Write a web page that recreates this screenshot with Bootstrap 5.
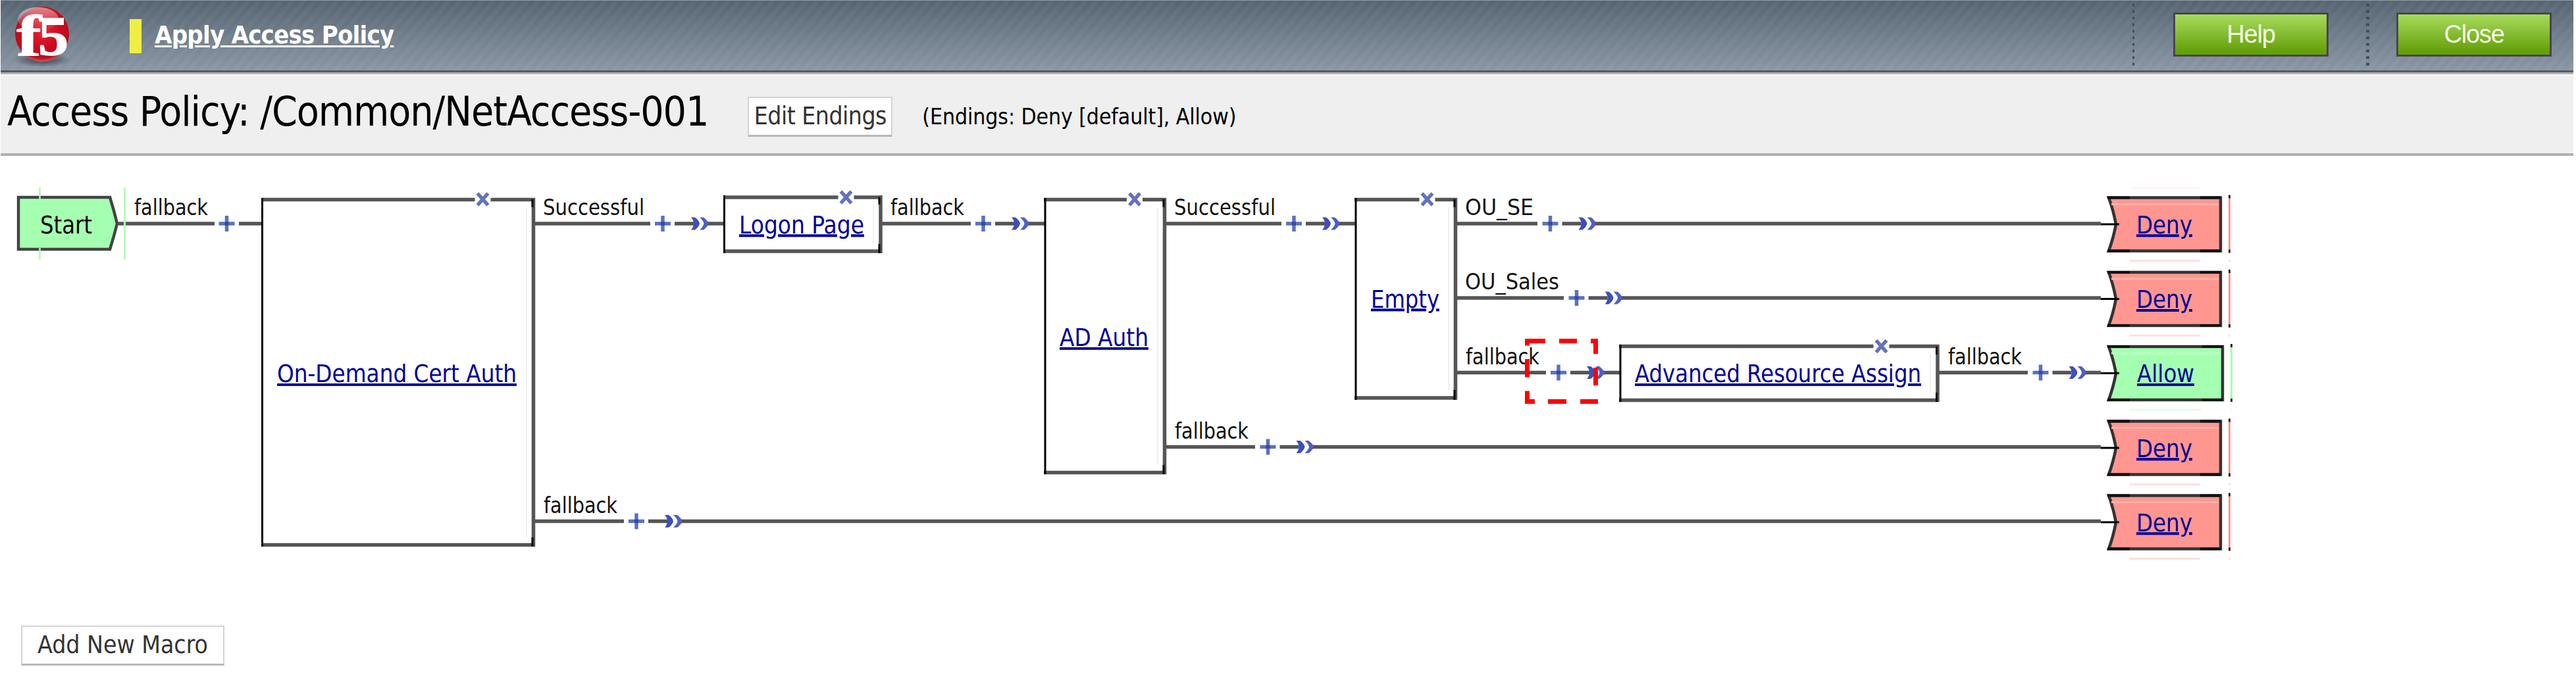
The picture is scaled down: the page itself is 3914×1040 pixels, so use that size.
<!DOCTYPE html>
<html lang="en">
<head>
<meta charset="utf-8">
<meta name="viewport" content="width=device-width, initial-scale=1">
<title>Access Policy: /Common/NetAccess-001</title>
<link href="https://cdn.jsdelivr.net/npm/bootstrap@5.3.0/dist/css/bootstrap.min.css" rel="stylesheet">
<style>
  body { font-family: "DejaVu Sans Condensed", "DejaVu Sans", sans-serif; font-stretch: condensed; background: #fff; color: #000; overflow: hidden; }
  .shell { width: 3909px; margin-left: 1px; }
  .topbar {
    height: 113px; padding: 0 33px 0 17px; border-bottom: 3px solid #b4b2b0; border-top: 1px solid #8f9aa3;
    background:
      linear-gradient(#4d5c6b, #4d5c6b) bottom / 100% 3px no-repeat,
      repeating-linear-gradient(130deg, rgba(255,255,255,.035) 0 4px, rgba(255,255,255,0) 7px 10px, rgba(255,255,255,.035) 13px),
      linear-gradient(#566471, #8c98a6);
  }
  .flag { width: 18px; height: 52px; background: #efee45; margin: 0 20px 2px 87px; }
  .apply { font-size: 38px; line-height: 46px; font-weight: 700; color: #fff; text-decoration-thickness: 3px; text-underline-offset: 3px; letter-spacing: -.8px; margin-bottom: 5px; }
  .apply:hover { color: #fff; }
  .dots { height: 98px; background: repeating-linear-gradient(rgba(0,0,0,0) 0 2px, #3f4c59 3px 6px, rgba(0,0,0,0) 7px 10px); margin-bottom: 8px; }
  .dots-a { width: 3px; margin-right: 59px; }
  .dots-b { width: 5px; margin: 0 41px 8px 57px; }
  .green-btn { width: 236px; height: 67px; padding: 0; border: 3px solid #4b4450; border-radius: 0; font: 38px/58px "Liberation Sans", sans-serif; letter-spacing: -1.2px; color: #f4ffe4; background: linear-gradient(#a5dc58, #97cb48 25%, #64a00a 92%); margin-bottom: 7px; }
  .green-btn:hover { color: #fff; }
  .titlebar { height: 124px; background: #efefef; border-bottom: 4px solid #b0b0b0; border-top: 2px solid #f8f8f8; padding-left: 10px; }
  .policy-title { font-size: 62px; line-height: 72px; font-weight: 400; letter-spacing: -1.1px; padding-bottom: 9px; }
  .plain-btn { border: 2px solid #d4d4d4; border-bottom: 3px solid #b8b8b8; border-radius: 0; background: #fff; color: #333; font-size: 37px; padding: 0; text-align: center; white-space: nowrap; }
  .edit-btn { width: 220px; height: 61px; line-height: 54px; letter-spacing: -.5px; margin: 7px 0 0 60px; }
  .macro-btn { width: 309px; height: 61px; line-height: 54px; margin-left: 31px; }
  .endings { font-size: 33.5px; line-height: 40px; margin-left: 45px; padding-top: 8px; letter-spacing: -.1px; }
  .canvas { display: block; margin-left: -1px; }
  .canvas text { font-size: 36.8px; }
  .canvas .lbl { font-size: 33.5px; fill: #111; }
  .canvas a text { fill: #000099; text-decoration: underline; text-decoration-thickness: 3px; text-underline-offset: 3px; }
  .wire { stroke: #555; stroke-width: 5.5; fill: none; }
  .edge { stroke: #000; stroke-width: 3; fill: none; }
  .faint { stroke: #efefef; stroke-width: 2; }
</style>
<script src="https://cdn.jsdelivr.net/npm/bootstrap@5.3.0/dist/js/bootstrap.bundle.min.js"></script>
</head>
<body>
<div class="shell">
  <header class="topbar d-flex align-items-center">
    <svg width="92" height="104" viewBox="18 4 92 104" role="img" aria-label="f5">
      <defs>
        <radialGradient id="ball" cx=".5" cy=".42" r=".6"><stop offset="0" stop-color="#e5252f"/><stop offset=".55" stop-color="#cf0a22"/><stop offset=".85" stop-color="#b3101f"/><stop offset="1" stop-color="#d8756f"/></radialGradient>
        <radialGradient id="shade"><stop offset="0" stop-color="#2b333b" stop-opacity=".9"/><stop offset="1" stop-color="#2b333b" stop-opacity="0"/></radialGradient>
        <linearGradient id="gloss" x2="0" y2="1"><stop offset="0" stop-color="#fff" stop-opacity=".5"/><stop offset="1" stop-color="#fff" stop-opacity="0"/></linearGradient>
      </defs>
      <ellipse cx="64" cy="91" rx="44" ry="11" fill="url(#shade)"/>
      <ellipse cx="64" cy="52" rx="41" ry="42" fill="url(#ball)"/>
      <ellipse cx="58" cy="29" rx="31" ry="18" fill="url(#gloss)"/>
      <text x="25" y="84" font-family="Liberation Serif" font-weight="700" font-size="88" fill="#fff" stroke="#fff" stroke-width="1" textLength="38" lengthAdjust="spacingAndGlyphs">f</text>
      <text x="58" y="84" font-family="Liberation Serif" font-weight="700" font-size="84" fill="#fff" stroke="#fff" stroke-width="1.500" textLength="46" lengthAdjust="spacingAndGlyphs">5</text>
    </svg>
    <div class="flag"></div>
    <a class="apply" href="#">Apply Access Policy</a>
    <div class="dots dots-a ms-auto"></div>
    <button class="btn green-btn">Help</button>
    <div class="dots dots-b"></div>
    <button class="btn green-btn">Close</button>
  </header>
  <section class="titlebar d-flex align-items-center">
    <h1 class="policy-title mb-0">Access Policy: /Common/NetAccess-001</h1>
    <button class="plain-btn edit-btn">Edit Endings</button>
    <span class="endings">(Endings: Deny [default], Allow)</span>
  </section>

  <svg class="canvas" width="3480" height="714" viewBox="0 237 3480 714">
    <defs>
      <g id="plus" stroke="#5b73bd" stroke-width="5.500"><path d="M-12 0H12M0-12V12"/><path d="M-3 0H3" stroke="#3549a5"/></g>
      <g id="joint"><use href="#plus" x="19"/><path class="wire" d="M37 0H66M84 0H89"/><path d="M62-9.500H68Q74-5 75 0Q74 5 68 9.500H62Q66 5 66 0Q66-5 62-9.500Z" fill="#3f4fb8"/><path d="M75-9.500H81Q87-5 88.500 0Q87 5 81 9.500H75Q81 4 81.500 0Q81-4 75-9.500Z" fill="#5060bd"/></g>
      <g id="del"><path d="M-12 0H12" stroke="#fff" stroke-width="9"/><path d="M-8-9L8 9M8-9L-8 9" stroke="#6472bb" stroke-width="5.500"/></g>
      <g id="deny">
        <path d="M3204 3H3374V84H3204Q3211 65 3215 43.500Q3211 22 3204 3Z" fill="#ff9790" stroke="#333" stroke-width="4.500"/>
        <path d="M3208 13H3371" stroke="#ffb0aa" stroke-width="3"/>
        <path d="M3202 3H3236M3343 3H3374M3202 84H3236M3343 84H3374" stroke="#111" stroke-width="4"/>
        <path d="M3387.500 2V84" stroke="#ff9790" stroke-width="3"/><path d="M3387.500-1V4M3387.500 82V87" stroke="#222" stroke-width="3"/>
        <path d="M3236 99H3343M3386 99H3389" stroke="#ffdfdd" stroke-width="3"/>
        <path d="M3192 43.500H3220" stroke="#000" stroke-width="3"/>
      </g>
      <g id="allow">
        <path d="M3204 3H3377V84H3204Q3211 65 3215 43.500Q3211 22 3204 3Z" fill="#a5ffb0" stroke="#333" stroke-width="4.500"/>
        <path d="M3208 13H3374" stroke="#bcffc4" stroke-width="3"/>
        <path d="M3202 3H3236M3346 3H3377M3202 84H3236M3346 84H3377" stroke="#111" stroke-width="4"/>
        <path d="M3390.500 2V84" stroke="#a5ffb0" stroke-width="3"/><path d="M3390.500-1V4M3390.500 82V87" stroke="#222" stroke-width="3"/>
        <path d="M3236 99H3346M3389 99H3392" stroke="#e2ffe5" stroke-width="3"/>
        <path d="M3192 43.500H3220" stroke="#000" stroke-width="3"/>
      </g>
    </defs>

    <!-- start terminal -->
    <path d="M28 300H167Q173 319 178 340Q173 360 167 379H28Z" fill="#a5ffb0" stroke="#444" stroke-width="4.500"/>
    <path d="M60.500 285V304M60.500 377V394.500M189.500 285V394.500" stroke="#a5ffb0" stroke-width="2.500"/>
    <text x="61" y="354.500" textLength="79" lengthAdjust="spacingAndGlyphs">Start</text>

    <!-- branches -->
    <path class="wire" d="M180 340H188M191 340H326M363 340H398M813 340H988M1075 340H1100M1340 340H1475M1562 340H1587M1772 340H1947M2034 340H2059M2214 340H2336M2423 340H3192M2214 453H2376M2463 453H3192M2214 566.500H2349M2436 566.500H2461M2946 566.500H3081M3168 566.500H3192M1772 679.500H1907M1994 679.500H3192M813 792.500H948M1035 792.500H3192"/>
    <use href="#plus" x="344.500" y="340"/>
    <use href="#joint" x="988" y="340"/><use href="#joint" x="1475" y="340"/><use href="#joint" x="1947" y="340"/>
    <use href="#joint" x="2336.500" y="340"/><use href="#joint" x="2376.500" y="453"/><use href="#joint" x="2349" y="566.500"/>
    <use href="#joint" x="3081.500" y="566.500"/><use href="#joint" x="1907.500" y="679.500"/><use href="#joint" x="948" y="792.500"/>

    <g>
      <text class="lbl" x="204" y="327" textLength="112" lengthAdjust="spacingAndGlyphs">fallback</text>
      <text class="lbl" x="825" y="327" textLength="154" lengthAdjust="spacingAndGlyphs">Successful</text>
      <text class="lbl" x="1353" y="327" textLength="112" lengthAdjust="spacingAndGlyphs">fallback</text>
      <text class="lbl" x="1784" y="327" textLength="154" lengthAdjust="spacingAndGlyphs">Successful</text>
      <text class="lbl" x="2226" y="327" textLength="104" lengthAdjust="spacingAndGlyphs">OU_SE</text>
      <text class="lbl" x="2226" y="440" textLength="143" lengthAdjust="spacingAndGlyphs">OU_Sales</text>
      <text class="lbl" x="2227" y="553.500" textLength="112" lengthAdjust="spacingAndGlyphs">fallback</text>
      <text class="lbl" x="2960" y="553.500" textLength="112" lengthAdjust="spacingAndGlyphs">fallback</text>
      <text class="lbl" x="1785" y="667" textLength="112" lengthAdjust="spacingAndGlyphs">fallback</text>
      <text class="lbl" x="826" y="780" textLength="112" lengthAdjust="spacingAndGlyphs">fallback</text>
    </g>

    <!-- action boxes -->
    <path class="wire" d="M397 303.500H813M397 828.500H813M810.500 301V831"/><path class="edge" d="M398.500 301V831M809 303V315M809 817V831"/><path class="faint" d="M800 315V817"/>
    <path class="wire" d="M1099 300H1340M1099 382H1340M1338 297V385"/><path class="edge" d="M1100.500 297V385M1336 300V311M1336 371V385"/><path class="faint" d="M1327 311V371"/>
    <path class="wire" d="M1586 303.500H1772M1586 718.500H1772M1769.500 301V721"/><path class="edge" d="M1588 301V721M1768 303V315M1768 707V721"/><path class="faint" d="M1759 315V707"/>
    <path class="wire" d="M2058 303.500H2214M2058 605H2214M2211.500 301V608"/><path class="edge" d="M2060 301V608M2210 303V315M2210 593V608"/><path class="faint" d="M2201 315V593"/>
    <path class="wire" d="M2460 526.500H2946M2460 608.500H2946M2944 524V611"/><path class="edge" d="M2462 524V611M2942.500 527V539M2942.500 597V611"/><path class="faint" d="M2933 539V597"/>
    <use href="#del" x="733.500" y="303"/><use href="#del" x="1285.500" y="300"/><use href="#del" x="1724" y="303"/><use href="#del" x="2168.500" y="303"/><use href="#del" x="2858.500" y="526.500"/>

    <a href="#"><text x="421" y="581" textLength="364" lengthAdjust="spacingAndGlyphs">On-Demand Cert Auth</text></a>
    <a href="#"><text x="1123" y="354.500" textLength="190" lengthAdjust="spacingAndGlyphs">Logon Page</text></a>
    <a href="#"><text x="1610" y="526" textLength="135" lengthAdjust="spacingAndGlyphs">AD Auth</text></a>
    <a href="#"><text x="2083" y="467.500" textLength="104" lengthAdjust="spacingAndGlyphs">Empty</text></a>
    <a href="#"><text x="2484" y="581" textLength="435" lengthAdjust="spacingAndGlyphs">Advanced Resource Assign</text></a>

    <!-- endings -->
    <use href="#deny" y="297.500"/><use href="#deny" y="411"/><use href="#allow" y="524"/><use href="#deny" y="637.500"/><use href="#deny" y="750.500"/>
    <path d="M3236 286H3343" stroke="#fff0ef" stroke-width="2"/>
    <a href="#"><text x="3246" y="354.500" textLength="85" lengthAdjust="spacingAndGlyphs">Deny</text></a>
    <a href="#"><text x="3246" y="468" textLength="85" lengthAdjust="spacingAndGlyphs">Deny</text></a>
    <a href="#"><text x="3247" y="581" textLength="87" lengthAdjust="spacingAndGlyphs">Allow</text></a>
    <a href="#"><text x="3246" y="694.500" textLength="85" lengthAdjust="spacingAndGlyphs">Deny</text></a>
    <a href="#"><text x="3246" y="807.500" textLength="85" lengthAdjust="spacingAndGlyphs">Deny</text></a>

    <!-- highlight around the insert point -->
    <path d="M2317 518.500H2348M2369 518.500H2396M2417 518.500H2428M2320.500 515V525.500M2320.500 546V573.500M2320.500 594.500V614M2424.500 515V538M2424.500 559V586M2317 610.500H2332M2352 610.500H2380M2401 610.500H2428" stroke="#ff0000" stroke-width="7"/>
  </svg>
  <button class="plain-btn macro-btn">Add New Macro</button>
</div>
</body>
</html>
